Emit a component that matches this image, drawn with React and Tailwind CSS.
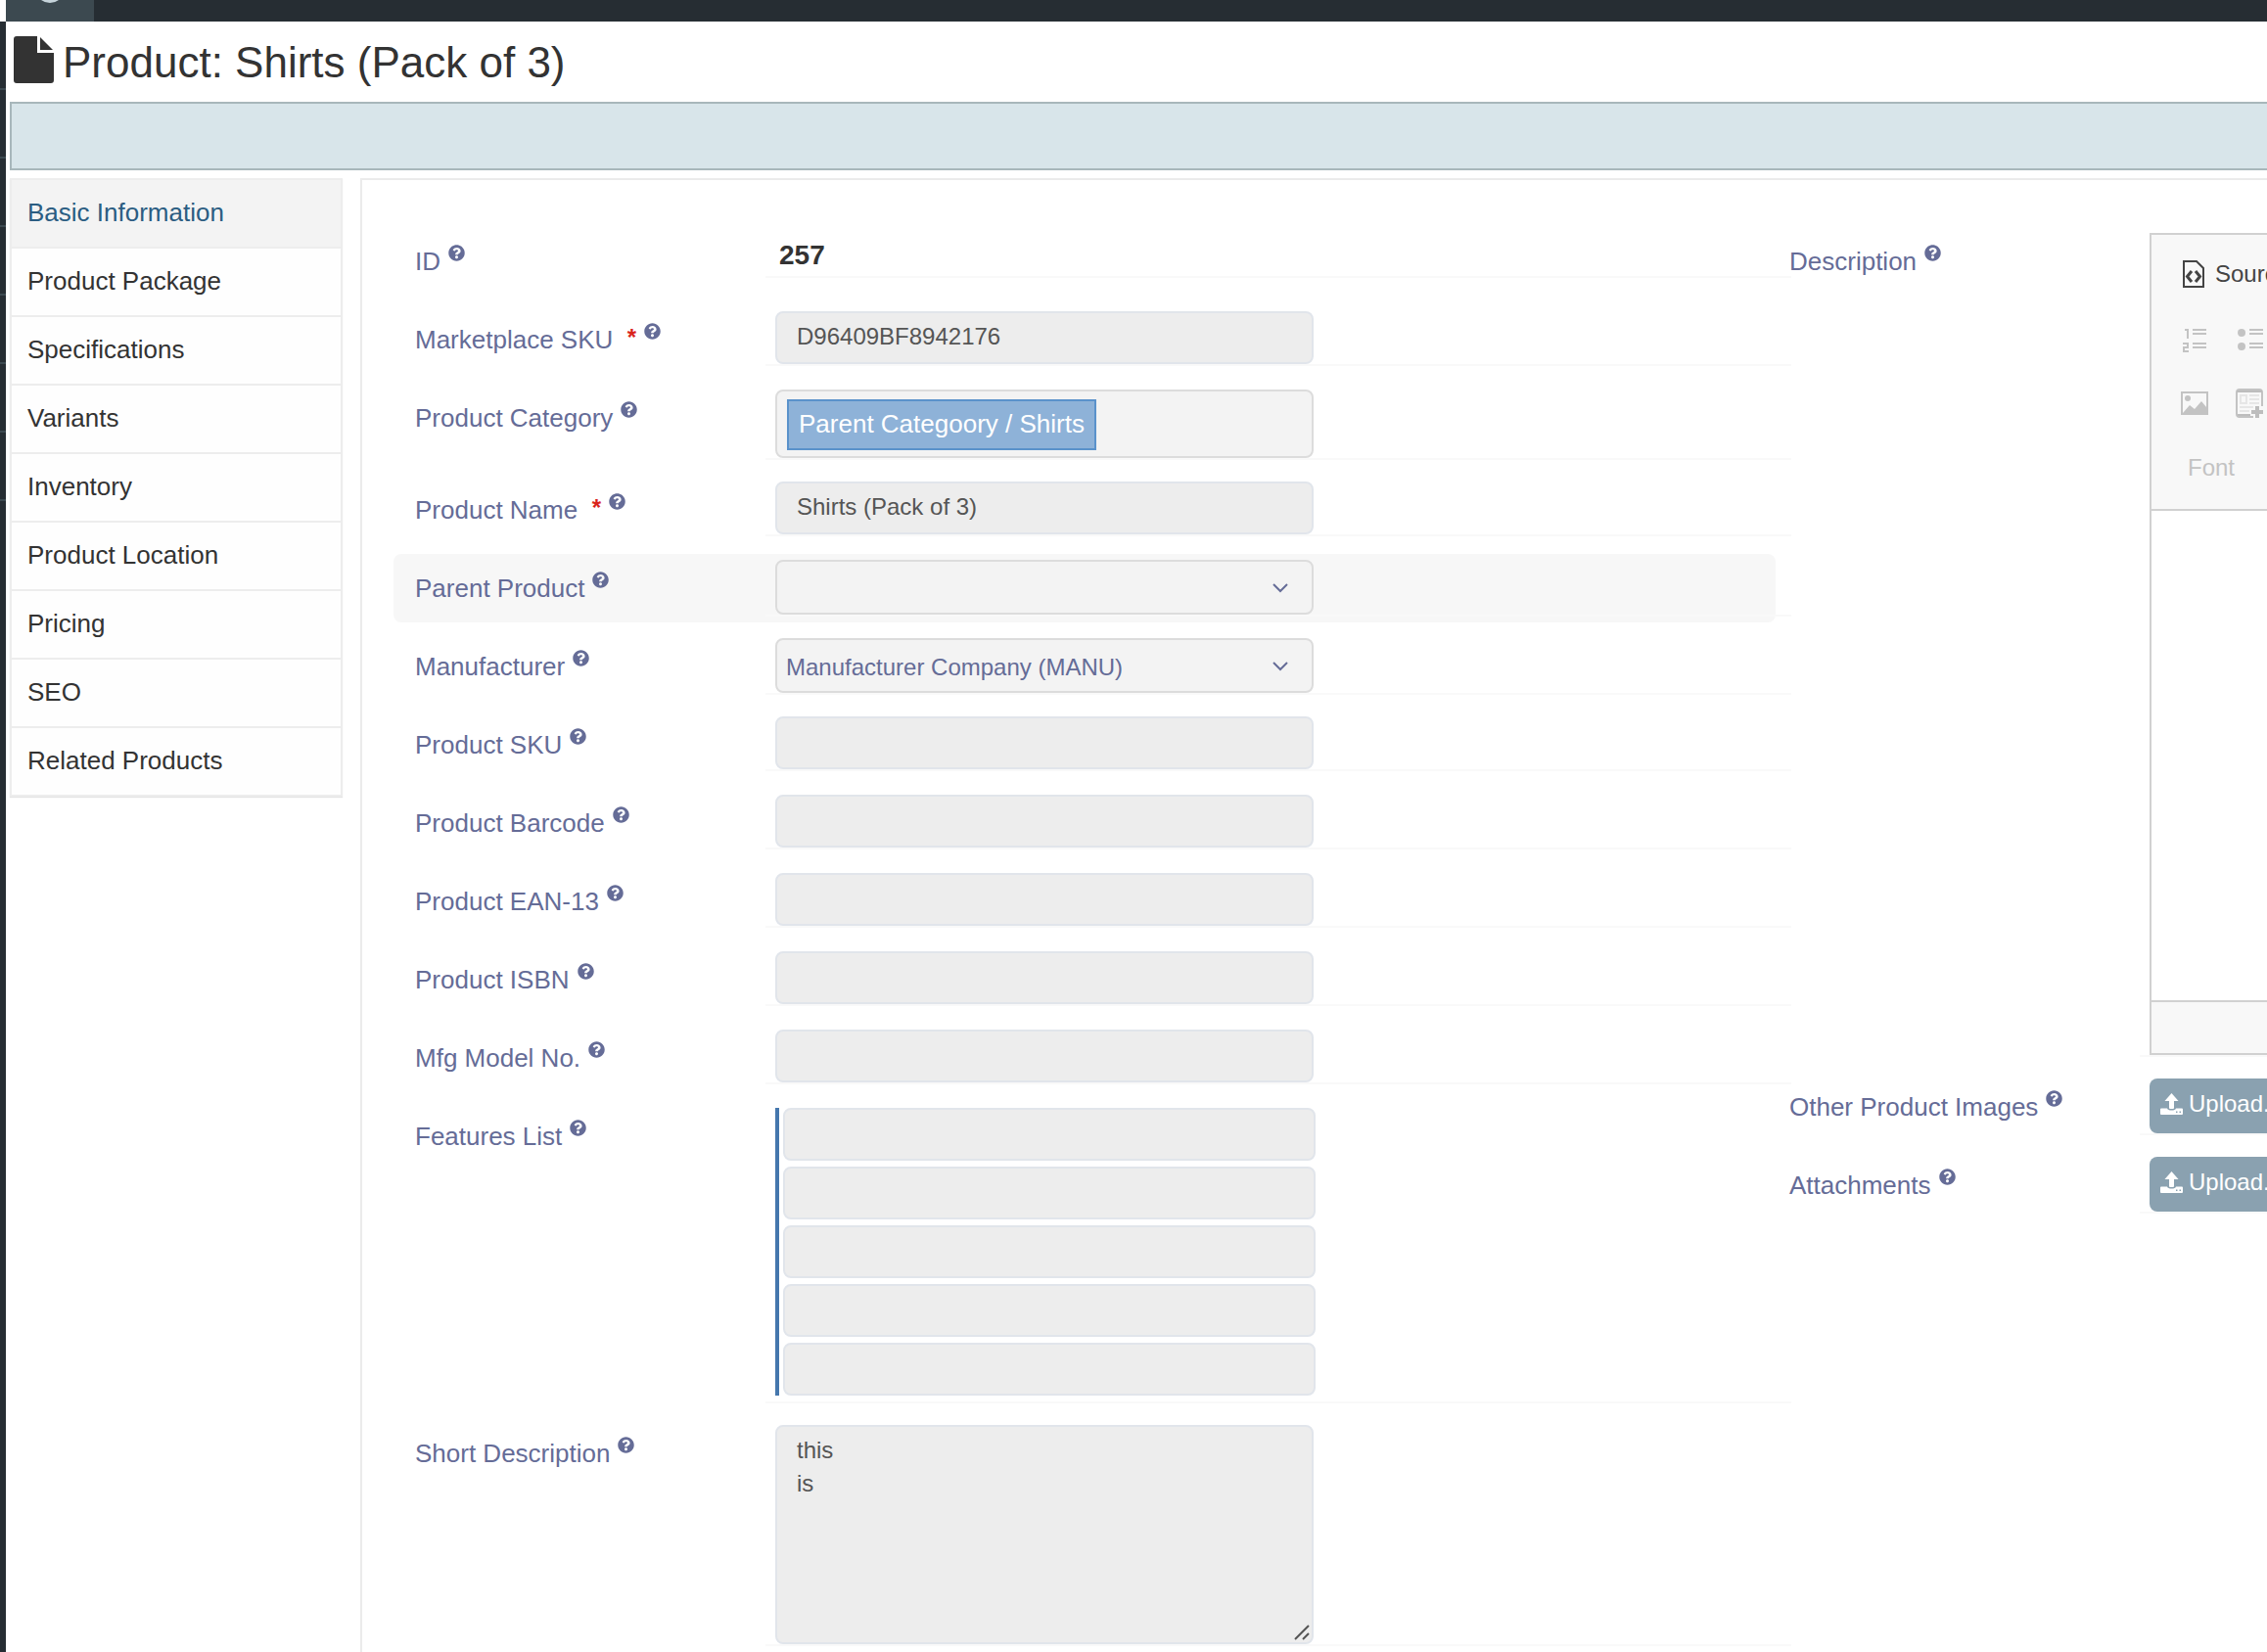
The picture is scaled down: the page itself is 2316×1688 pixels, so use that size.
import React from "react";
import { FaQuestionCircle } from "react-icons/fa";

const NAV = [
  "Basic Information",
  "Product Package",
  "Specifications",
  "Variants",
  "Inventory",
  "Product Location",
  "Pricing",
  "SEO",
  "Related Products",
];

function DocumentIcon() {
  return (
    <svg className="h-12 w-[42px] shrink-0" viewBox="0 0 42 48" fill="#333" aria-hidden="true">
      <path d="M3 0H24V17H41V45a3 3 0 0 1-3 3H3a3 3 0 0 1-3-3V3a3 3 0 0 1 3-3Z" />
      <path d="M27 1L40 14H27Z" />
    </svg>
  );
}

function SourceIcon() {
  return (
    <svg className="h-7 w-[22px] shrink-0" viewBox="0 0 22 28" fill="none" stroke="#444" strokeWidth="2" aria-hidden="true">
      <path d="M1 1H14L21 8V27H1Z" />
      <path d="M9 11L4.500 16.500L9 22M13 11L17.500 16.500L13 22" strokeWidth="3" />
    </svg>
  );
}

function NumberedListIcon() {
  return (
    <svg className="h-6 w-6" viewBox="0 0 24 24" fill="none" stroke="#c3c3c3" strokeWidth="2" aria-hidden="true">
      <path d="M10 1H24M10 5H24M10 15H24M10 19H24" />
      <path d="M2 1H5V10M0 15H5V19H1V23H6" />
    </svg>
  );
}

function BulletListIcon() {
  return (
    <svg className="h-6 w-[26px]" viewBox="0 0 26 24" fill="#c3c3c3" aria-hidden="true">
      <circle cx="4" cy="4" r="4" />
      <circle cx="4" cy="18" r="4" />
      <path d="M12 0H26V2H12ZM12 4H26V6H12ZM12 14H26V16H12ZM12 18H26V20H12Z" />
    </svg>
  );
}

function ImageIcon() {
  return (
    <svg className="h-6 w-7" viewBox="0 0 28 24" fill="#c3c3c3" aria-hidden="true">
      <path d="M0 0H28V24H0ZM2 2V22L9 14L14 18L21 10L26 16V2Z" fillRule="evenodd" />
      <circle cx="7" cy="7" r="3" />
    </svg>
  );
}

function TemplatesIcon() {
  return (
    <svg className="h-[30px] w-7" viewBox="0 0 28 30" fill="none" aria-hidden="true">
      <path d="M18 29H4a3 3 0 0 1-3-3V4a3 3 0 0 1 3-3H24a3 3 0 0 1 3 3V18" stroke="#c3c3c3" strokeWidth="2" />
      <path d="M1 3H27M2 27H15" stroke="#bdbdbd" strokeWidth="2" />
      <path d="M5 7H11V15H5ZM14 7H24M14 11H24M14 15H24M4 19H18M4 23H14" stroke="#e6e6e6" strokeWidth="2" />
      <path d="M22 18V30M16 24H28" stroke="#bdbdbd" strokeWidth="4" />
    </svg>
  );
}

function UploadIcon() {
  return (
    <svg className="h-[22px] w-[23px] shrink-0" viewBox="0 0 23 22" fill="#fff" aria-hidden="true">
      <path d="M11.500 0L18.500 8H14V15a1 1 0 0 1-1 1H10a1 1 0 0 1-1-1V8H4.500Z" />
      <path
        fillRule="evenodd"
        d="M1 15.500H7C7.500 17 9 17.500 11.500 17.500S15.500 17 16 15.500H22a1 1 0 0 1 1 1V21a1 1 0 0 1-1 1H1a1 1 0 0 1-1-1V16.500a1 1 0 0 1 1-1ZM16 18.500V20H17.500V18.500ZM19.500 18.500V20H21V18.500Z"
      />
    </svg>
  );
}

function Row({ label, id, required, active, height = "", children }) {
  const state = active ? "bg-[#f7f7f7]" : "";
  return (
    <div className={`-my-1.5 mb-4 flex items-start rounded-lg py-1.5 ${state}`}>
      <div className="flex min-h-[58px] w-[380px] shrink-0 items-start pl-[22px] leading-[58px] text-[#656c97]">
        <label htmlFor={id} className="whitespace-pre">
          {label}
          {required && (
            <>
              {"  "}
              <span className="align-[3px] text-[24px] leading-none font-bold text-[#d9241b]">*</span>
            </>
          )}
        </label>
        <button type="button" aria-label={`Help: ${label}`} className="mt-3 ml-2">
          <FaQuestionCircle className="block size-[17px]" />
        </button>
      </div>
      <div className={`-mr-4 min-w-0 flex-1 border-b-2 border-[#f9f9f9] pl-2.5 ${height}`}>{children}</div>
    </div>
  );
}

function TextField({ id, value = "", label, full }) {
  const width = full ? "w-full" : "w-[550px] max-w-full";
  return (
    <input
      id={id}
      type="text"
      aria-label={label}
      defaultValue={value}
      className={`block h-[54px] rounded-lg border-2 border-[#e1e5eb] bg-[#ededed] px-5 pb-0.5 text-2xl text-[#555] outline-none ${width}`}
    />
  );
}

function SelectField({ id, options }) {
  return (
    <div className="relative w-[550px] max-w-full">
      <select
        id={id}
        className="block h-14 w-full appearance-none rounded-lg border-2 border-[#dcdcdc] bg-[#f3f3f3] pt-1 pr-14 pl-[9px] text-2xl text-[#656c97] outline-none"
      >
        {options.map((o) => (
          <option key={o}>{o}</option>
        ))}
      </select>
      <svg
        className="pointer-events-none absolute top-6 right-6 h-2.5 w-[18px]"
        viewBox="0 0 18 10"
        fill="none"
        stroke="#656c97"
        strokeWidth="2"
        aria-hidden="true"
      >
        <path d="M1 1L8 8L15 1" />
      </svg>
    </div>
  );
}

function UploadButton() {
  return (
    <button
      type="button"
      className="flex h-14 items-center gap-1.5 rounded-lg bg-[#8aa1b0] px-[11px] pb-1 text-2xl text-white"
    >
      <UploadIcon />
      Upload...
    </button>
  );
}

function Editor() {
  return (
    <div className="w-[1000px] border-2 border-[#d1d1d1]">
      <div className="flex h-[282px] flex-col border-b-2 border-[#d1d1d1] bg-[#f8f8f8] pt-[7px] pl-[30px]">
        <button type="button" className="flex h-[66px] items-center gap-[11px] self-start pl-0.5 text-2xl text-[#444]">
          <SourceIcon />
          Source
        </button>
        <div className="flex h-[66px] items-center gap-8 pt-1 pl-0.5">
          <button type="button" aria-label="Numbered list">
            <NumberedListIcon />
          </button>
          <button type="button" aria-label="Bulleted list">
            <BulletListIcon />
          </button>
        </div>
        <div className="flex h-[66px] items-center gap-7">
          <button type="button" aria-label="Image">
            <ImageIcon />
          </button>
          <button type="button" aria-label="Templates">
            <TemplatesIcon />
          </button>
        </div>
        <button type="button" className="h-[66px] self-start pl-[7px] text-2xl text-[#c3c3c3]">
          Font
        </button>
      </div>
      <textarea
        id="description"
        className="block h-[500px] w-full resize-none bg-white p-6 text-2xl outline-none"
      />
      <div className="h-[54px] border-t-2 border-[#d1d1d1] bg-[#f8f8f8]" />
    </div>
  );
}

export default function App() {
  return (
    <div className="flex h-screen flex-col overflow-hidden bg-white font-['Liberation_Sans',Arial,sans-serif] text-[26px] text-[#333]">
      <header className="ml-1.5 h-[22px] shrink-0 bg-[#262d33]">
        <div className="flex h-full w-[90px] justify-center overflow-hidden bg-[#3c4950]">
          <svg className="h-full w-8" viewBox="0 0 32 22" aria-hidden="true">
            <circle cx="16" cy="-12" r="15" fill="#c5d3da" />
          </svg>
        </div>
      </header>

      <div className="flex min-h-0 flex-1">
        <div className="w-1.5 shrink-0 bg-[#262d33] pt-[68px]">
          {NAV.slice(0, 7).map((n) => (
            <div key={n} className="h-[70px] border-t-2 border-[#3c4950]" />
          ))}
        </div>

        <div className="flex min-w-0 flex-1 flex-col pl-1">
          <div className="flex h-[82px] shrink-0 items-center gap-2 pb-1 pl-1">
            <DocumentIcon />
            <h1 className="pt-1.5 text-[44px] leading-[60px] whitespace-nowrap">Product: Shirts (Pack of 3)</h1>
          </div>

          <div className="mb-2 h-[70px] shrink-0 border-2 border-r-0 border-[#a8b7bb] bg-[#d8e5ea]" />

          <div className="flex min-h-0 flex-1 items-stretch gap-[18px]">
            <nav className="w-[340px] shrink-0 self-start border-2 border-b-0 border-[#ededed] shadow-[0_1px_1px_#e4e4e4]">
              {NAV.map((n, i) => (
                <a
                  key={n}
                  href="#"
                  className={`block h-[70px] border-b-2 border-[#ededed] pl-4 leading-[66px] ${
                    i === 0 ? "bg-[#f3f3f3] text-[#2b5d82]" : "bg-[#fefefe]"
                  }`}
                >
                  {n}
                </a>
              ))}
            </nav>

            <main className="flex min-w-0 flex-1 items-start overflow-hidden border-t-2 border-l-2 border-[#ebebeb] pt-[54px] pl-8">
              <div className="-mr-2 min-w-0 flex-1">
                <Row label="ID" id="product-id">
                  <output id="product-id" className="block pt-0.5 pl-1 text-[28px] leading-[42px] font-bold">
                    257
                  </output>
                </Row>
                <Row label="Marketplace SKU" id="marketplace-sku" required>
                  <TextField id="marketplace-sku" value="D96409BF8942176" />
                </Row>
                <Row label="Product Category" id="category">
                  <div className="flex h-[70px] w-[550px] max-w-full items-start rounded-lg border-2 border-[#dcdcdc] bg-[#f3f3f3] px-2.5 py-2">
                    <button
                      id="category"
                      type="button"
                      className="h-[52px] border-2 border-[#5a92cb] bg-[#8eb2d8] px-2.5 pb-0.5 whitespace-nowrap text-white"
                    >
                      Parent Categoory / Shirts
                    </button>
                  </div>
                </Row>
                <Row label="Product Name" id="name" required>
                  <TextField id="name" value="Shirts (Pack of 3)" />
                </Row>
                <Row label="Parent Product" id="parent" active>
                  <SelectField id="parent" options={[""]} />
                </Row>
                <Row label="Manufacturer" id="manufacturer">
                  <SelectField id="manufacturer" options={["Manufacturer Company (MANU)"]} />
                </Row>
                <Row label="Product SKU" id="sku">
                  <TextField id="sku" />
                </Row>
                <Row label="Product Barcode" id="barcode">
                  <TextField id="barcode" />
                </Row>
                <Row label="Product EAN-13" id="ean">
                  <TextField id="ean" />
                </Row>
                <Row label="Product ISBN" id="isbn">
                  <TextField id="isbn" />
                </Row>
                <Row label="Mfg Model No." id="model">
                  <TextField id="model" />
                </Row>
                <Row label="Features List" id="feature-1" height="pb-1.5">
                  <div className="flex w-[552px] max-w-full flex-col gap-1.5 border-l-4 border-[#4577ad] pl-1">
                    {[1, 2, 3, 4, 5].map((n) => (
                      <TextField key={n} id={`feature-${n}`} label={`Feature ${n}`} full />
                    ))}
                  </div>
                </Row>
                <Row label="Short Description" id="short-description">
                  <div className="relative w-[550px] max-w-full">
                    <textarea
                      id="short-description"
                      defaultValue={"this\nis"}
                      className="block h-56 w-full resize-none rounded-lg border-2 border-[#e1e5eb] bg-[#ededed] px-5 py-[7px] text-2xl leading-[34px] text-[#555] outline-none"
                    />
                    <svg
                      className="pointer-events-none absolute right-1 bottom-1 size-4"
                      viewBox="0 0 16 16"
                      stroke="#555"
                      strokeWidth="2"
                      aria-hidden="true"
                    >
                      <path d="M1 15L15 1M9 15L15 9" />
                    </svg>
                  </div>
                </Row>
              </div>

              <div className="-mt-1.5 w-[510px] shrink-0 overflow-hidden pt-1.5">
                <Row label="Description" id="description">
                  <Editor />
                </Row>
                <Row label="Other Product Images" id="images">
                  <UploadButton />
                </Row>
                <Row label="Attachments" id="attachments">
                  <UploadButton />
                </Row>
              </div>
            </main>
          </div>
        </div>
      </div>
    </div>
  );
}
